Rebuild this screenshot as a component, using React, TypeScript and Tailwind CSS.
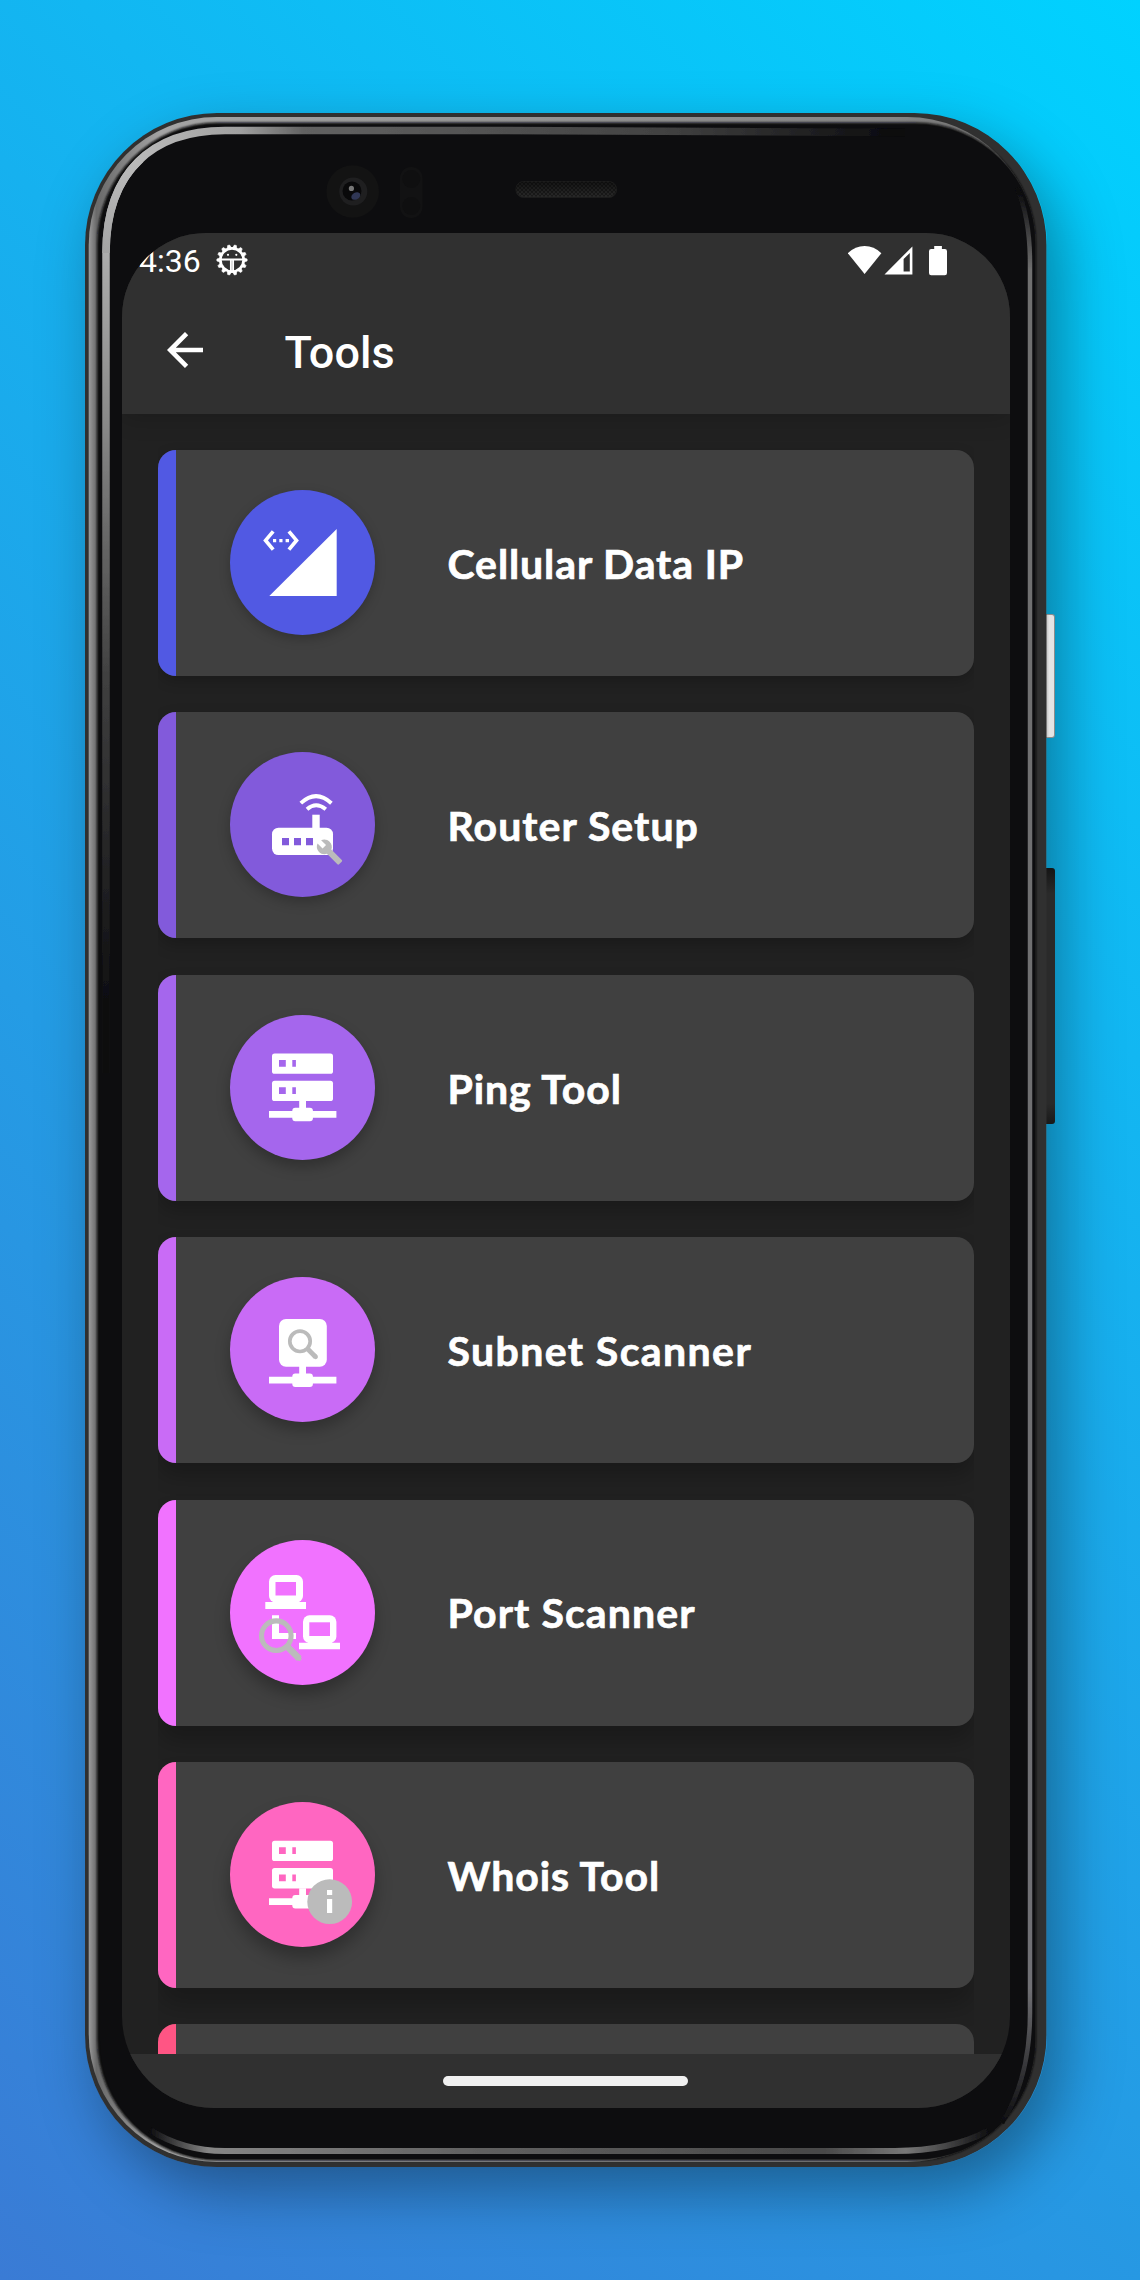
import React from "react";

const GREY = "#bbbbbb";

function CellularIcon() {
  return (
    <g>
      <path d="M39.3 106H106.7V39Z" fill="#fff" />
      <path d="M43.2 41.4L35.6 50.4L43.2 59.6M58.9 41.4L66.5 50.4L58.9 59.6" fill="none" stroke="#fff" strokeWidth="3.7" />
      <path d="M43 49h3.2v3.2H43zM49.3 49h3.2v3.2h-3.2zM55.6 49h3.4v3.2h-3.4z" fill="#fff" />
    </g>
  );
}

function RouterIcon({ color }: { color: string }) {
  return (
    <g>
      <rect x="42" y="75.7" width="61" height="27.4" rx="6.5" fill="#fff" />
      <rect x="82.3" y="62.7" width="7.4" height="16" fill="#fff" />
      <path d="M52 86h7v7.3h-7zM64 86h7v7.3h-7zM76 86h7v7.3h-7z" fill={color} />
      <path d="M70.8 51.2Q86 37 101.4 51.2M77 57.2Q86 49.2 95.8 57.2" fill="none" stroke="#fff" strokeWidth="3.9" />
      <path
        transform="translate(85.7 86.2) scale(1.15)"
        fill={GREY}
        d="M22.7 19l-9.1-9.1c.9-2.3.4-5-1.5-6.9-2-2-5-2.4-7.4-1.3L9 6 6 9 1.6 4.7C.4 7.1.9 10.1 2.9 12.1c1.9 1.9 4.6 2.4 6.9 1.5l9.1 9.1c.4.4 1 .4 1.4 0l2.3-2.3c.5-.4.5-1.1.1-1.4z"
      />
    </g>
  );
}

function ServerIcon({ color }: { color: string }) {
  return (
    <g>
      <rect x="42" y="38.4" width="61" height="20.4" rx="2.6" fill="#fff" />
      <rect x="42" y="65.7" width="61" height="20.4" rx="2.6" fill="#fff" />
      <path d="M49 45h6.8v6.8H49zM62.3 45h3.6v6.8h-3.6zM49 72.2h6.8V79H49zM62.3 72.2h3.6V79h-3.6z" fill={color} />
      <path d="M69.2 86h6.8v8h-6.8zM39 96h67.4v6.8H39z" fill="#fff" />
      <rect x="62.3" y="92.7" width="20.6" height="13.5" rx="3" fill="#fff" />
    </g>
  );
}

function SubnetIcon() {
  return (
    <g>
      <rect x="49" y="42" width="47.8" height="47.8" rx="7" fill="#fff" />
      <path d="M69.2 89h6.8v9h-6.8zM39 99.8h67.4v6.8H39z" fill="#fff" />
      <rect x="62.3" y="96.4" width="20.6" height="13.6" rx="3" fill="#fff" />
      <circle cx="70" cy="64.3" r="10.2" fill="none" stroke={GREY} strokeWidth="3.7" />
      <path d="M77 71.3L85.4 79.7" stroke={GREY} strokeWidth="4.8" />
      <path d="M85 79.3L85.6 79.9" stroke={GREY} strokeWidth="4.6" strokeLinecap="round" />
    </g>
  );
}

function PortIcon({ color }: { color: string }) {
  return (
    <g>
      <rect x="39" y="35" width="34" height="27.5" rx="6.5" fill="#fff" />
      <path d="M45.5 42H66v13.5H45.5z" fill={color} />
      <path d="M35.3 62H76v7H35.3zM44 60h24v3H44z" fill="#fff" />
      <rect x="73" y="75.3" width="33.4" height="27.6" rx="6.5" fill="#fff" />
      <path d="M79.3 82.3H100V96H79.3z" fill={color} />
      <path d="M69 102.7h41v6.6H69zM78 100h24v3H78zM42 75.3h7V93h17v6H42z" fill="#fff" />
      <circle cx="46.3" cy="95.7" r="14.8" fill="none" stroke={GREY} strokeWidth="5.1" />
      <path d="M55.8 105.2L69.3 118.7" stroke={GREY} strokeWidth="6.6" />
      <path d="M69.3 118.7l-.2-.2" stroke={GREY} strokeWidth="4.5" strokeLinecap="round" />
    </g>
  );
}

function WhoisIcon({ color }: { color: string }) {
  return (
    <g>
      <g transform="translate(0 .3)">
        <ServerIcon color={color} />
      </g>
      <circle cx="99.7" cy="99.7" r="22.4" fill={GREY} />
      <path d="M97 88h5.2v5H97zM97 97h5.2v14H97z" fill="#fff" />
    </g>
  );
}

type Tool = {
  name: string;
  color: string;
  bg: string;
  tracking: string;
  shadow: string;
  cardShadow: string;
  icon: React.ReactNode;
};

const tools: Tool[] = [
  {
    name: "Cellular Data IP",
    color: "#5159e3",
    bg: "bg-[#5159e3]",
    tracking: "tracking-[0.9px]",
    shadow: "shadow-[0_4px_12px_rgba(0,0,0,0.22)]",
    cardShadow: "shadow-[0_5px_14px_rgba(0,0,0,0.2)]",
    icon: <CellularIcon />,
  },
  {
    name: "Router Setup",
    color: "#825adb",
    bg: "bg-[#825adb]",
    tracking: "tracking-[1.05px]",
    shadow: "shadow-[0_5px_13px_rgba(0,0,0,0.24)]",
    cardShadow: "shadow-[0_7px_16px_rgba(0,0,0,0.22)]",
    icon: <RouterIcon color="#825adb" />,
  },
  {
    name: "Ping Tool",
    color: "#a566ed",
    bg: "bg-[#a566ed]",
    tracking: "tracking-[0.9px]",
    shadow: "shadow-[0_7px_14px_rgba(0,0,0,0.26)]",
    cardShadow: "shadow-[0_10px_18px_rgba(0,0,0,0.22)]",
    icon: <ServerIcon color="#a566ed" />,
  },
  {
    name: "Subnet Scanner",
    color: "#c96bf6",
    bg: "bg-[#c96bf6]",
    tracking: "tracking-[1.4px]",
    shadow: "shadow-[0_8px_15px_rgba(0,0,0,0.26)]",
    cardShadow: "shadow-[0_13px_20px_rgba(0,0,0,0.22)]",
    icon: <SubnetIcon />,
  },
  {
    name: "Port Scanner",
    color: "#f172ff",
    bg: "bg-[#f172ff]",
    tracking: "tracking-[1.1px]",
    shadow: "shadow-[0_10px_16px_rgba(0,0,0,0.27)]",
    cardShadow: "shadow-[0_16px_22px_rgba(0,0,0,0.22)]",
    icon: <PortIcon color="#f172ff" />,
  },
  {
    name: "Whois Tool",
    color: "#ff66c1",
    bg: "bg-[#ff66c1]",
    tracking: "tracking-[0.9px]",
    shadow: "shadow-[0_11px_17px_rgba(0,0,0,0.28)]",
    cardShadow: "shadow-[0_18px_24px_rgba(0,0,0,0.22)]",
    icon: <WhoisIcon color="#ff66c1" />,
  },
  { name: "", color: "#ff5584", bg: "bg-[#ff5584]", tracking: "", shadow: "", cardShadow: "", icon: null },
];

function ToolCard({ tool }: { tool: Tool }) {
  return (
    <div className={`flex h-[226px] shrink-0 overflow-hidden rounded-[18px] bg-[#404040] ${tool.cardShadow}`}>
      <div className={`w-[18px] shrink-0 ${tool.bg}`} />
      {tool.icon && (
        <div className="flex items-center pb-[1px] pl-[54px]">
          <div className={`size-[145px] shrink-0 rounded-full ${tool.bg} ${tool.shadow}`}>
            <svg viewBox="0 0 145 145" className="size-full">
              {tool.icon}
            </svg>
          </div>
          <span className={`ml-[72.5px] pt-[2px] font-['Lato'] text-[41px] font-bold whitespace-nowrap text-white [-webkit-text-stroke:0.7px_white] ${tool.tracking}`}>
            {tool.name}
          </span>
        </div>
      )}
    </div>
  );
}

/* Metallic rim, glass edge highlights, camera and earpiece */
function PhoneBody() {
  return (
    <svg className="absolute inset-0 size-full" viewBox="0 0 962 2054" fill="none">
      <defs>
        <radialGradient id="rimLight" gradientUnits="userSpaceOnUse" cx="40" cy="40" r="900">
          <stop offset="0" stopColor="#bdbdbd" />
          <stop offset=".13" stopColor="#a0a0a0" />
          <stop offset=".2" stopColor="#626262" />
          <stop offset=".6" stopColor="#424242" />
          <stop offset=".85" stopColor="#0d0d0f" />
        </radialGradient>
        <linearGradient id="leftLight" gradientUnits="userSpaceOnUse" x1="0" y1="60" x2="0" y2="900">
          <stop offset="0" stopColor="#bdbdbd" />
          <stop offset=".3" stopColor="#888" />
          <stop offset=".6" stopColor="#404040" />
          <stop offset="1" stopColor="#0d0d0f" />
        </linearGradient>
        <linearGradient id="rim" gradientUnits="userSpaceOnUse" x1="0" y1="0" x2="951" y2="0">
          <stop offset="0" stopColor="#b4b4b4" />
          <stop offset=".012" stopColor="#6a6a6a" />
          <stop offset=".08" stopColor="#a4a4a4" />
          <stop offset=".85" stopColor="#858585" />
          <stop offset=".96" stopColor="#6c6c6c" />
          <stop offset="1" stopColor="#222" />
        </linearGradient>
        <linearGradient id="right" gradientUnits="userSpaceOnUse" x1="0" y1="80" x2="0" y2="2010">
          <stop offset="0" stopColor="#0d0d0f" />
          <stop offset=".04" stopColor="#707070" />
          <stop offset=".93" stopColor="#707074" />
          <stop offset="1" stopColor="#0d0d0f" />
        </linearGradient>
        <linearGradient id="bottom" gradientUnits="userSpaceOnUse" x1="65" y1="0" x2="905" y2="0">
          <stop offset="0" stopColor="#0d0d0f" />
          <stop offset=".07" stopColor="#868686" />
          <stop offset=".4" stopColor="#606060" />
          <stop offset=".8" stopColor="#484848" />
          <stop offset=".9" stopColor="#787878" />
          <stop offset="1" stopColor="#0d0d0f" />
        </linearGradient>
        <linearGradient id="ear" x1="0" y1="0" x2="0" y2="1">
          <stop offset="0" stopColor="#141414" />
          <stop offset="1" stopColor="#292929" />
        </linearGradient>
        <filter id="soft" filterUnits="userSpaceOnUse" x="0" y="0" width="962" height="2054">
          <feGaussianBlur stdDeviation="1.3" />
        </filter>
        <filter id="fine" filterUnits="userSpaceOnUse" x="0" y="0" width="962" height="2054">
          <feGaussianBlur stdDeviation=".6" />
        </filter>
        <pattern id="mesh" width="4" height="4" patternUnits="userSpaceOnUse">
          <path d="M0 0h2v2H0zM2 2h2v2H2z" fill="#000" fillOpacity=".35" />
        </pattern>
      </defs>
      <rect width="961.5" height="2054" rx="132" fill="#303030" />
      <rect x="3.7" y="4" width="946.5" height="2045" rx="128" fill="url(#rim)" />
      <rect x="12" y="9.5" width="939" height="2038" rx="121" fill="#0d0d0f" filter="url(#soft)" />
      <rect x="15" y="12" width="935" height="2034" rx="118" fill="#0d0d0f" />
      <path d="M21 960V140Q21 78 56 46" stroke="url(#leftLight)" strokeWidth="7.5" filter="url(#fine)" />
      <path d="M21 140C21 60 66 17.5 140 17.5H420L820 19.5" stroke="url(#rimLight)" strokeWidth="7.5" filter="url(#fine)" />
      <path d="M932 75Q945 105 945 150V1900Q945 1965 917 2010" stroke="url(#right)" strokeWidth="4.5" filter="url(#fine)" />
      <path d="M65 2017Q98 2038 140 2038H810Q865 2038 903 2018" stroke="url(#bottom)" strokeWidth="6" filter="url(#fine)" />
      <circle cx="267.7" cy="78.5" r="26.3" fill="#131313" />
      <circle cx="268.3" cy="78.5" r="14" fill="#1f1f20" />
      <circle cx="267" cy="78" r="9.5" fill="#09090a" />
      <ellipse cx="270.8" cy="83" rx="4.8" ry="3.4" transform="rotate(-30 270.8 83)" fill="#303755" />
      <circle cx="266.4" cy="75.4" r="2.6" fill="#777" />
      <rect x="315" y="54" width="22.5" height="51" rx="11" fill="#121213" />
      <circle cx="326.3" cy="66" r="9" fill="#0f0f10" />
      <circle cx="326.3" cy="93" r="9" fill="#0f0f10" />
      <rect x="431" y="68.5" width="100.5" height="16" rx="7.5" fill="url(#ear)" stroke="#1c1c1c" strokeWidth="1" />
      <rect x="431" y="68.5" width="100.5" height="15" rx="7.5" fill="url(#mesh)" />
    </svg>
  );
}

function DebugIcon() {
  const teeth = Array.from({ length: 14 }, (_, i) => (i * 360) / 14 + 12.86);
  return (
    <svg viewBox="0 0 32 32" className="size-8" fill="none">
      {teeth.map((a) => (
        <path key={a} d="M13.9 4L15 .9H17L18.1 4Z" fill="#fff" stroke="#fff" strokeWidth=".6" transform={`rotate(${a} 16 16)`} />
      ))}
      <circle cx="16" cy="16" r="11.6" stroke="#fff" strokeWidth="2.6" />
      <path d="M5 15.5H27M14.9 16V27M17.1 16V27" stroke="#fff" strokeWidth="1.9" />
      <circle cx="12" cy="10.8" r="1.1" fill="#fff" />
      <circle cx="20.3" cy="10.8" r="1.1" fill="#fff" />
    </svg>
  );
}

function StatusBar() {
  return (
    <div className="flex h-[53px] items-center pr-[62px] pl-[17px]">
      <span className="w-[62px] pt-[2px] font-['Roboto'] text-[32px] leading-none text-white">4:36</span>
      <div className="ml-[14.5px]">
        <DebugIcon />
      </div>
      <svg className="ml-auto h-[32px] w-[100px]" viewBox="0 0 100 32" fill="#fff">
        <path d="M-.2 9.2Q7.2 2 16.6 2T33.4 9.2L16.6 30Z" />
        <path fillRule="evenodd" d="M36.5 30.5L64.4 2.4V30.5ZM55.6 15V27.5H61.8V9Z" />
        <path d="M86.2 2h7.7v3h3Q99 5 99 7.3V29Q99 31.3 96.8 31.3H83.2Q81 31.3 81 29V7.3Q81 5 83.2 5h3Z" />
      </svg>
    </div>
  );
}

export default function App() {
  return (
    <div className="flex h-[2280px] w-[1140px] overflow-hidden bg-[linear-gradient(45deg,#3a7bd5,#00d2ff)] pt-[113px] pl-[85px]">
      <div className="relative h-[2054px] w-[962px] shrink-0 rounded-[132px] pt-[120px] pl-[37px] shadow-[14px_24px_60px_rgba(0,0,0,0.35)]">
        <div className="absolute top-[501px] left-[961px] h-[124px] w-[9px] rounded-r-[3px] border border-l-0 border-[#8c8c8c] bg-gradient-to-r from-[#bdbdbd] to-[#e4e4e4] to-40%" />
        <div className="absolute top-[755px] left-[961px] h-[256px] w-[9px] rounded-r-[3px] bg-[linear-gradient(#151515,#2a2a2a_10%,#2a2a2a_92%,#191919)]" />
        <PhoneBody />
        <div className="relative flex h-[1875px] w-[888px] flex-col overflow-hidden rounded-t-[84px] rounded-b-[92px] bg-[#212121]">
          <header className="relative z-10 h-[181px] shrink-0 bg-[#303030] shadow-[0_2px_24px_rgba(0,0,0,0.2)]">
            <StatusBar />
            <div className="flex h-[128px] items-center pl-[45px]">
              <svg className="size-[36px]" viewBox="0 0 36 36" fill="none" stroke="#fff" strokeWidth="4.6">
                <path d="M36 18H3M19.6 1.6L3.2 18L19.6 34.4" />
              </svg>
              <h1 className="ml-[81.5px] pt-[5px] font-['Roboto'] text-[45px] leading-none font-medium text-white">Tools</h1>
            </div>
          </header>
          <main className="mx-[36px] flex min-h-0 flex-1 flex-col gap-[36.4px] overflow-hidden pt-[36px]">
            {tools.map((tool) => (
              <ToolCard key={tool.color} tool={tool} />
            ))}
          </main>
          <footer className="relative flex h-[54px] shrink-0 bg-[#303030] pt-[22px] pl-[321px]">
            <div className="h-[10px] w-[245px] rounded-full bg-[#f0f0f0]" />
          </footer>
        </div>
      </div>
    </div>
  );
}
